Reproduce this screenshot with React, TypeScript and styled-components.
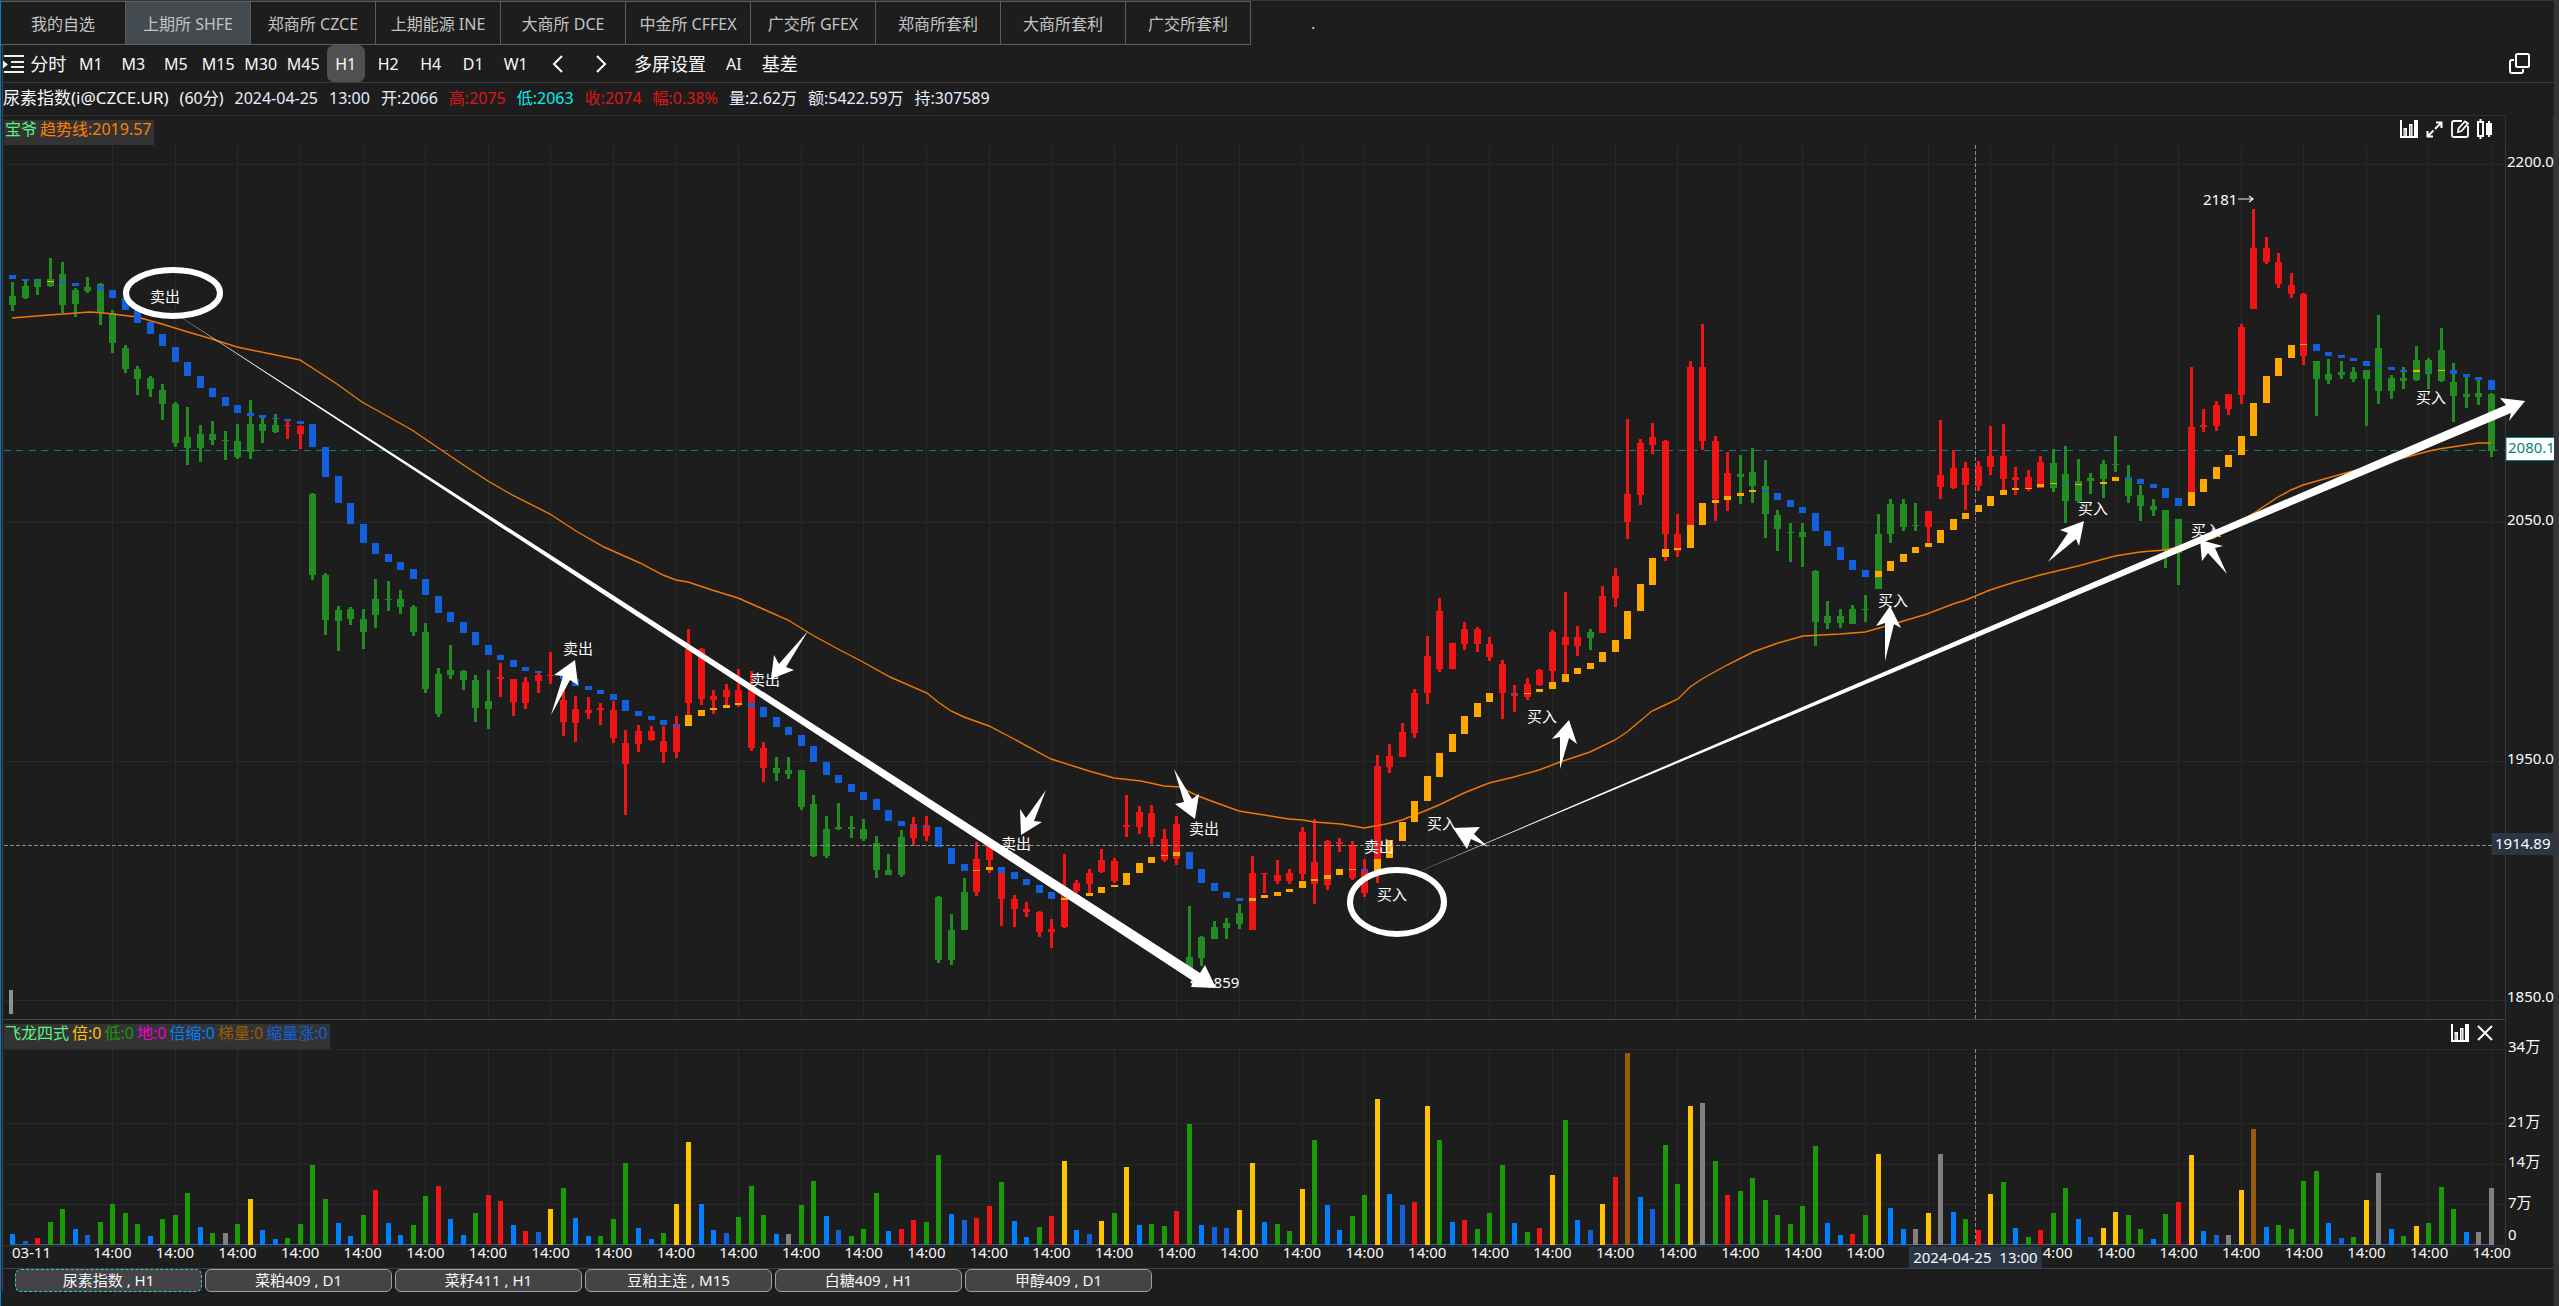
import React from "react";
import styled, { createGlobalStyle } from "styled-components";

/* ---------- data ---------- */

type Candle = [tone: string, high: number, top: number, bottom: number, low: number];

// One entry per hour bar: tone (g = falling, r = rising), high, body top, body bottom, low
const CANDLES: Candle[] = `
g282,296,305,311 g281,286,298,299 g279,279,287,295 g258,279,286,287 g262,274,305,313 g288,290,304,317 g277,287,291,293 g283,284,313,325
g310,313,343,353 g345,348,369,373 g366,369,379,395 g376,378,389,397 g384,390,404,420 g402,404,443,447 g407,437,448,465 g425,434,448,462
g421,434,440,445 g431,440,441,460 g424,441,457,459 g400,424,452,459 g417,424,431,443 g414,425,432,433 r421,425,426,439 r425,426,434,449
g493,494,575,580 g573,575,620,635 g606,610,621,651 g607,609,619,625 g609,619,632,649 g579,599,615,628 g581,599,600,611 g590,599,607,614
g605,607,632,636 g623,632,689,693 g668,674,714,717 g645,670,675,679 g670,671,680,690 g675,680,708,722 g670,701,709,729 r663,677,679,697
r679,679,702,716 r677,682,703,709 r673,675,681,693 r652,675,676,684 r690,700,722,736 r696,709,723,742 r697,710,713,719 r703,708,710,725
r701,710,738,743 r730,743,764,815 r725,731,744,752 r726,731,740,741 r726,741,752,763 r716,724,752,758 r629,649,703,715 r648,649,699,705
r690,696,700,714 r684,690,697,705 r669,690,705,707 r671,687,748,751 r742,748,768,782 g757,768,773,781 g757,770,774,779 g770,770,807,810
g795,804,856,857 g816,829,856,858 g803,827,829,830 g816,827,829,838 g819,829,839,841 g836,843,870,878 g854,870,875,875 g830,837,875,877
r817,824,838,846 r816,825,836,841 g896,897,960,963 g914,930,960,965 g878,892,930,930 r842,859,892,896 r843,845,860,873 r870,873,899,926
r895,899,909,927 r902,909,912,917 r911,912,932,937 r919,929,932,948 r854,887,927,928 r880,883,891,895 r869,873,884,893 r849,860,872,873
r858,861,881,883 r795,825,827,837 r806,812,827,834 r805,813,837,844 r829,839,860,862 r816,824,859,865 g906,957,973,978 g936,937,958,966
g921,927,939,939 g918,923,928,939 g904,913,924,929 r856,873,930,930 r873,873,874,893 r860,875,881,884 r869,873,881,884 r827,832,874,880
r819,862,884,904 r840,841,885,890 r838,842,844,852 r841,846,878,880 r859,870,893,897 r755,766,860,883 r744,756,767,773 r723,732,757,757
r689,693,733,738 r636,656,693,704 r598,611,669,672 r643,643,669,669 r622,629,644,650 r627,629,644,652 r637,644,657,661 r660,664,693,719
r685,694,696,712 r678,684,697,700 r669,670,685,686 r630,632,671,682 r592,637,645,674 r626,637,646,656 g629,632,638,650 r586,596,633,633
r568,576,598,607 r419,494,522,539 r439,443,495,505 r423,437,445,454 r440,441,534,561 r514,534,551,557 r361,367,525,548 r324,367,441,450
r436,441,499,521 r452,473,500,511 g455,474,477,504 g448,472,486,503 g460,486,514,538 g510,515,529,551 g523,532,533,562 g523,532,537,567
g570,571,622,646 g601,616,623,629 g609,616,623,628 g605,609,624,624 g595,609,610,622 g514,534,589,589 g499,504,534,543 g499,504,527,531
g503,525,526,531 r511,511,527,545 r420,475,487,499 r450,468,488,489 r462,468,485,510 r461,466,486,491 r426,456,467,475 r424,456,479,490
r467,477,480,495 r470,477,489,491 r456,462,488,488 g449,463,488,492 g446,474,501,523 g459,481,501,503 g473,478,481,494 g460,464,479,498
g436,464,465,472 g465,477,496,503 g485,495,506,521 g499,506,510,516 g510,510,550,568 g519,519,553,585 r367,427,492,500 r409,425,427,432
r401,405,426,431 r394,394,409,415 r324,327,395,404 r209,248,309,309 r237,248,262,264 r253,262,284,288 r273,285,294,298 r293,294,356,365
g361,361,379,416 g359,374,380,384 g361,372,375,379 g367,372,379,382 g370,370,379,426 g315,348,391,404 g375,378,391,399 g367,378,381,389
g346,360,380,381 g358,360,374,389 g328,350,381,382 g363,382,396,422 g377,394,397,408 g378,393,397,405 g393,394,451,457
`
  .trim()
  .split(/\s+/)
  .map((s) => [s[0], ...s.slice(1).split(",").map(Number)] as Candle);

type Block = [tone: string, top: number, bottom: number];

// Trend blocks (b = down trend, y = up trend), "-" where no block is drawn
const BLOCKS: (Block | null)[] = `
b275,279 b279,281 b281,282 y281,282 b281,283 b283,286 - b286,290 b290,298 b298,310 b310,323 b322,334 b334,346 b347,362 b362,376 b376,388
b388,397 b397,406 b405,413 b413,416 b415,418 b418,419 b419,421 b421,424 b424,447 b447,477 b476,503 b503,524 b524,543 b543,554 b554,562
b562,570 b569,579 b579,595 b596,613 b612,622 b622,633 b632,645 b645,655 b655,660 b660,667 b667,671 b671,673 - b675,679 b679,686 b686,690
b690,694 b694,700 b700,711 b711,716 b716,720 b720,725 b725,727 y715,726 y710,716 y708,710 y705,708 y703,705 b703,707 b707,717 b717,727
b727,735 b735,746 b746,762 b762,775 b775,783 b784,792 b792,800 b799,810 b810,821 b821,826 b826,827 b827,828 b827,847 b848,864 b864,871
y870,871 y867,870 b867,873 b872,879 b879,885 b885,893 b892,899 y898,900 y895,897 y893,896 y887,893 y885,887 y873,885 y863,873 y857,863
y855,856 y852,856 b852,869 b869,883 b883,891 b892,898 b898,901 y898,901 y895,898 y892,896 y889,892 y881,888 y879,881 y875,879 y869,875
y869,870 b869,871 y859,872 y840,858 y822,841 y801,822 y776,801 y753,777 y734,752 y716,734 y703,717 y693,702 - b693,694 y693,694 y689,692
y682,689 y674,682 y668,674 y663,669 y652,662 y640,652 y611,639 y584,611 y558,585 y549,557 y548,550 y525,548 y503,525 y500,503 y496,500
y493,496 y490,492 b490,492 b493,500 b500,507 b507,513 b513,531 b531,546 b547,560 b560,570 b570,577 y571,577 y561,571 y554,562 y547,553
y543,547 y530,543 y519,530 y513,519 y505,512 y496,506 y490,495 y488,490 y488,489 y484,487 y483,484 b483,484 y484,485 - y482,484 y477,481
b477,479 b479,484 b484,488 b488,498 b498,506 y492,506 y479,492 y467,479 y455,467 y436,455 y403,436 y376,403 y358,376 y345,358 y344,345
b344,351 b352,356 b355,358 b358,361 b361,366 b366,367 b367,370 b370,372 y370,372 b370,371 y370,371 b370,374 b374,377 b377,380 b380,390
`
  .trim()
  .split(/\s+/)
  .map((s) => (s === "-" ? null : ([s[0], ...s.slice(1).split(",").map(Number)] as Block)));

// Volume bars: category letter and top edge
const VOLUMES: [string, number][] = `
b1234 d1241 r1238 g1222 g1209 b1229 d1235 g1222 g1204 g1213 g1224 b1236 g1219 g1215 g1193 b1227 g1233 w1233 g1224 y1199 b1230 b1239 g1238
g1224 g1165 g1199 b1223 b1236 g1215 r1190 b1223 b1235 g1225 g1196 r1186 b1219 b1235 g1213 r1195 r1201 b1225 r1231 d1232 y1209 g1188 b1218
b1236 g1236 g1219 g1163 b1228 b1239 g1233 y1204 y1142 b1204 b1230 d1233 g1217 g1186 g1215 b1234 w1234 g1205 g1181 b1216 d1230 g1236 g1229
g1193 b1231 r1229 r1220 g1222 g1155 b1214 d1220 r1218 r1206 g1182 b1221 b1237 g1227 r1216 y1161 b1230 d1234 y1221 g1213 y1167 b1225 g1224
g1226 r1211 g1124 b1225 d1227 d1228 y1210 y1163 b1222 g1224 g1231 y1189 g1140 b1205 b1230 g1216 g1195 y1099 b1194 d1205 r1202 y1106 g1140
b1222 r1220 g1229 g1213 g1165 b1223 g1232 r1228 y1175 g1120 b1220 d1230 y1204 r1177 o1053 b1197 d1209 g1145 g1184 y1106 w1103 g1161 r1195
g1191 g1178 g1200 g1215 g1224 g1206 g1146 b1223 b1235 r1234 g1215 y1154 b1208 b1229 w1229 y1213 w1154 b1212 g1219 r1230 y1194 g1182 b1228
g1237 r1230 g1213 g1188 b1219 d1237 y1228 y1212 g1215 g1229 b1239 g1214 r1202 y1155 b1231 d1235 w1235 y1190 o1129 b1227 g1225 g1229 g1181
g1171 b1223 d1238 g1237 y1200 w1173 b1229 g1236 y1226 g1223 g1187 g1209 b1232 w1232 w1188
`
  .trim()
  .split(/\s+/)
  .map((s) => [s[0], Number(s.slice(1))]);

const TREND_LINE =
  "12,318 49,315 90,312 104,313 137,317 162,324 188,332 212,339 237,347 300,360 337,384 362,402 412,430 437,447 462,464 488,481 514,496 550,514 576,531 604,547 640,563 663,575 676,580 688,582 712,590 738,598 763,609 788,620 801,628 814,636 838,649 863,662 890,677 927,693 938,702 951,711 964,717 989,726 1014,739 1051,759 1089,771 1114,778 1141,781 1164,786 1180,787 1198,796 1214,802 1239,811 1264,815 1289,819 1303,820 1314,822 1341,824 1364,828 1386,824 1402,820 1427,810 1439,805 1464,793 1489,783 1514,777 1539,770 1560,762 1590,752 1615,740 1627,732 1652,711 1665,705 1678,699 1690,687 1702,679 1727,665 1753,652 1778,643 1803,636 1840,634 1865,632 1890,625 1927,614 1953,604 1966,600 1990,590 2015,582 2040,575 2078,566 2115,556 2140,552 2165,550 2178,547 2214,538 2257,511 2278,497 2291,490 2303,485 2349,472 2396,460 2429,451 2439,449 2478,443 2491,443";

const ARROWS = [
  "159,303 1200,973 1205,965 1216,988 1191,987 1193,981",
  "1404,878 2506,405 2500,398 2525,401 2509,421 2511,413",
  "551,715 563,676 554,675 575,660 578,685 570,680",
  "808,631 779,664 774,655 771,679 794,670 786,667",
  "1046,790 1026,818 1020,809 1021,835 1042,822 1034,821",
  "1174,769 1184,802 1175,804 1195,819 1199,794 1192,799",
  "1488,847 1474,834 1480,827 1453,828 1467,849 1471,839",
  "1560,769 1560,737 1552,739 1569,720 1577,744 1569,738",
  "1885,661 1885,623 1876,626 1890,606 1901,628 1894,624",
  "2048,562 2068,533 2060,530 2084,521 2079,546 2076,539",
  "2227,574 2215,548 2223,546 2200,540 2202,561 2208,553",
];

const SIGNALS: [string, number, number][] = [
  ["卖出", 150, 302],
  ["卖出", 563, 654],
  ["卖出", 750, 685],
  ["卖出", 1001, 849],
  ["卖出", 1189, 834],
  ["卖出", 1364, 852],
  ["买入", 1377, 900],
  ["买入", 1427, 829],
  ["买入", 1527, 722],
  ["买入", 1878, 606],
  ["买入", 2078, 514],
  ["买入", 2191, 536],
  ["买入", 2416, 403],
];

const TONES: Record<string, string> = { g: "#228b22", r: "#f01414", b: "#1260dc", y: "#ffa800" };
const VOLUME_TONES: Record<string, string> = {
  g: "#1a9a04",
  r: "#f01414",
  b: "#0080ff",
  d: "#1260dc",
  y: "#ffc400",
  w: "#808080",
  o: "#965c0c",
};

const STEP = 2479 / 198;
const barX = (i: number) => Math.round(12 + i * STEP);
const GRID_X = Array.from({ length: 39 }, (_, k) => barX(8 + 5 * k));

const EXCHANGES = [
  "我的自选",
  "上期所 SHFE",
  "郑商所 CZCE",
  "上期能源 INE",
  "大商所 DCE",
  "中金所 CFFEX",
  "广交所 GFEX",
  "郑商所套利",
  "大商所套利",
  "广交所套利",
];
const PERIODS = ["M1", "M3", "M5", "M15", "M30", "M45", "H1", "H2", "H4", "D1", "W1"];
const QUOTES: [string, string][] = [
  ["(60分)", "#f4f4f4"],
  ["2024-04-25", "#e6eeff"],
  ["13:00", "#e6eeff"],
  ["开:2066", "#e6eeff"],
  ["高:2075", "#e01414"],
  ["低:2063", "#00f0f0"],
  ["收:2074", "#e01414"],
  ["幅:0.38%", "#e01414"],
  ["量:2.62万", "#e6eeff"],
  ["额:5422.59万", "#e6eeff"],
  ["持:307589", "#e6eeff"],
];
const SHEETS = ["尿素指数 , H1", "菜粕409 , D1", "菜籽411 , H1", "豆粕主连 , M15", "白糖409 , H1", "甲醇409 , D1"];

/* ---------- styles ---------- */

const FONT = `"Noto Sans", "Noto Sans CJK SC", sans-serif`;

const GlobalStyle = createGlobalStyle`
  *, *::before, *::after { box-sizing: border-box; }
  body { margin: 0; background: #1d1d1d; color: #f8f8f8; font: 16px/20px ${FONT}; }
  button { font: inherit; color: inherit; background: none; border: 0; padding: 0; margin: 0; cursor: pointer; }
`;

const Shell = styled.div`
  min-height: 100vh;
  display: flex;
  flex-direction: column;
  border-top: 1px solid #34343a;
  border-left: 1px solid #0a80cc;
  border-right: 5px solid #34343a;
  background: #1d1d1d;
  white-space: nowrap;
  overflow: hidden;
`;

const ExchangeBar = styled.nav`
  display: flex;
  align-items: center;
  height: 44px;
`;

const ExchangeTabs = styled.div`
  flex: none;
  display: grid;
  grid-template-columns: repeat(10, 1fr);
  width: 1250px;
  height: 44px;
  border: solid #5c5c5c;
  border-width: 1px 0;
`;

const ExchangeTab = styled.button<{ $active?: boolean }>`
  border-right: 1px solid #5c5c5c;
  padding-top: 2px;
  color: #c4c4c4;
  background: ${(p) => (p.$active ? "#434a50" : "transparent")};
`;

const Dot = styled.span`
  margin-left: 60px;
  color: #c0c0c0;
`;

const Workspace = styled.main`
  margin-left: 1px;
  border-left: 1px solid #48484a;
`;

const Toolbar = styled.div`
  display: flex;
  align-items: center;
  height: 38px;
  border-bottom: 1px solid #3c3c3c;
`;

const PeriodGrid = styled.div`
  display: grid;
  grid-template-columns: repeat(14, 1fr);
  width: 595px;
  height: 37px;
  margin-left: 3px;
`;

const PeriodButton = styled.button<{ $active?: boolean; $large?: boolean }>`
  display: flex;
  align-items: center;
  justify-content: center;
  margin: 0 2px;
  border-radius: 7px;
  font-size: ${(p) => (p.$large ? 18 : 16)}px;
  background: ${(p) => (p.$active ? "#505050" : "transparent")};
`;

const ToolLinks = styled.div`
  display: flex;
  align-items: center;
  gap: 20px;
  padding-left: 12px;
`;

const ToolButton = styled.button<{ $large?: boolean }>`
  font-size: ${(p) => (p.$large ? 18 : 16)}px;
`;

const IconButton = styled.button`
  display: flex;
  align-items: center;
  justify-content: center;
  color: #fff;
`;

const PopOut = styled(IconButton)`
  margin: 0 24px 0 auto;
`;

const QuoteLine = styled.div`
  display: flex;
  align-items: center;
  gap: 11px;
  height: 32px;
  padding-bottom: 2px;
`;

const Quote = styled.span<{ $color: string }>`
  color: ${(p) => p.$color};
`;

const Instrument = styled.span`
  font-size: 17px;
`;

const ChartPane = styled.section`
  border-right: 1px solid #303030;
`;

const PaneHead = styled.header<{ $line: string }>`
  display: flex;
  justify-content: space-between;
  align-items: flex-start;
  height: 30px;
  margin-right: 47px;
  padding-right: 12px;
  border-top: 1px solid ${(p) => p.$line};
  border-right: 1px solid #303030;
`;

const Legend = styled.div`
  display: flex;
  gap: 3px;
  height: 25px;
  margin: 4px 0 0 1px;
  padding: 0 2px 0 1px;
  background: #333333;
  line-height: 18px;
`;

const IconRow = styled.div`
  display: flex;
  align-items: center;
  gap: 8px;
  height: 22px;
  margin-top: 2px;
`;

const Plot = styled.svg`
  display: block;
  width: 100%;
  height: auto;
  overflow: visible;
  font-family: ${FONT};
  font-size: 15px;
  fill: #fcfcfc;
`;

const TimeAxis = styled.div`
  position: relative;
  display: grid;
  grid-template-columns: 78px repeat(39, 1fr) 30px;
  height: 21px;
  font-size: 15px;
  line-height: 10px;
`;

const Tick = styled.span<{ $first?: boolean }>`
  text-align: ${(p) => (p.$first ? "left" : "center")};
  padding-left: ${(p) => (p.$first ? 9 : 0)}px;
`;

const CursorTime = styled.span`
  position: absolute;
  top: 0;
  left: 77.35%;
  transform: translateX(-50%);
  height: 21px;
  padding: 0 4px;
  background: #2a3644;
  line-height: 20px;
  white-space: pre;
`;

const SheetBar = styled.nav`
  display: flex;
  gap: 3px;
  padding-left: 12px;
  border-top: 1px solid #404040;
`;

const SheetTab = styled.button<{ $active?: boolean }>`
  width: 187px;
  height: 23px;
  border: 1px ${(p) => (p.$active ? "dashed #38c8c8" : "solid #a0a0a0")};
  border-radius: 6px;
  background: #424446;
  font-size: 15px;
  line-height: 21px;
`;

/* ---------- icons ---------- */

const IndentIcon = () => (
  <svg width="21" height="20" viewBox="0 0 21 20" stroke="#f0f0f0" strokeWidth="2" aria-hidden="true">
    <path d="M1 2H21M8 8H21M8 13H21M1 18H21" fill="none" />
    <path d="M0 6.5L5 10.5L0 14.5Z" fill="#f0f0f0" stroke="none" />
  </svg>
);

const ChevronIcon = ({ back }: { back?: boolean }) => (
  <svg width="12" height="18" viewBox="0 0 12 18" fill="none" stroke="#fff" strokeWidth="2" aria-hidden="true">
    <path d={back ? "M10 1L2 9L10 17" : "M2 1L10 9L2 17"} />
  </svg>
);

const PopOutIcon = () => (
  <svg width="21" height="21" viewBox="0 0 21 21" fill="none" stroke="#fff" strokeWidth="2" aria-hidden="true">
    <rect x="7" y="1" width="13" height="13" rx="1.5" />
    <path d="M5 7H3Q1 7 1 9V18Q1 20 3 20H12Q14 20 14 18V16" />
  </svg>
);

const BarsIcon = () => (
  <svg width="18" height="18" viewBox="0 0 18 18" fill="#fff" aria-hidden="true">
    <path d="M0 0H2V16H18V18H0Z" />
    <path d="M3.5 8H7V17H3.5ZM9 4H12.5V17H9ZM14 0H18V17H14Z" />
    <path d="M5 9.5V16M10.700 5.5V16" stroke="#9a9a9a" />
  </svg>
);

const ExpandIcon = () => (
  <svg width="17" height="17" viewBox="0 0 17 17" fill="none" stroke="#fff" strokeWidth="2" aria-hidden="true">
    <path d="M10 1.5H15.5V7M15.5 1.5L9 8M7 15.5H1.5V10M1.5 15.5L7.500 9.500" />
  </svg>
);

const EditIcon = () => (
  <svg width="18" height="18" viewBox="0 0 18 18" fill="none" stroke="#fff" strokeWidth="1.8" aria-hidden="true">
    <path d="M11 1H3Q1 1 1 3V15Q1 17 3 17H15Q17 17 17 15V6" />
    <path d="M7 12L7.500 8.500L14 1.500L17 3.500L10.500 11Z" />
  </svg>
);

const CandlesIcon = () => (
  <svg width="16" height="20" viewBox="0 0 16 20" fill="none" stroke="#fff" strokeWidth="2" aria-hidden="true">
    <path d="M3.500 0V3M3.500 17V20M12 2V5M12 14V18" />
    <rect x="1" y="3" width="5" height="14" />
    <rect x="10" y="5" width="4" height="10" fill="#fff" />
  </svg>
);

const CloseIcon = () => (
  <svg width="16" height="16" viewBox="0 0 16 16" fill="none" stroke="#fff" strokeWidth="2" aria-hidden="true">
    <path d="M1 1L15 15M15 1L1 15" />
  </svg>
);

/* ---------- charts ---------- */

const PriceChart = () => (
  <Plot viewBox="3 145 2550 874" role="img" aria-label="尿素指数 60分 K线">
    <g stroke="#292929">
      {GRID_X.map((x) => (
        <path key={x} d={`M${x + 0.5} 145V1019`} />
      ))}
      {[164, 522, 761, 1000].map((y) => (
        <path key={y} d={`M4 ${y + 0.5}H2505`} />
      ))}
    </g>
    <path d="M2505.5 145V1019" stroke="#383838" />
    <path d="M4 450.5H2505" stroke="#0a8080" strokeDasharray="7 5 7 6" />
    <rect x="9" y="990" width="4" height="24" fill="#909090" />

    {CANDLES.map(([tone, high, top, bottom, low], i) => (
      <path
        key={i}
        fill={TONES[tone]}
        d={`M${barX(i) - 1} ${high}h3V${low}h-3ZM${barX(i) - 3} ${top}h7V${Math.max(bottom, top + 1)}h-7Z`}
      />
    ))}
    <polyline points={TREND_LINE} fill="none" stroke="#f07800" strokeWidth="1.4" />
    {BLOCKS.map(
      (b, i) => b && <rect key={i} x={barX(i) - 3} y={b[1]} width="7" height={b[2] - b[1]} fill={TONES[b[0]]} />
    )}

    <g stroke="#8c8c8c" strokeDasharray="4 2">
      <path d="M4 845.5H2505" />
      <path d="M1975.5 145V1019" />
    </g>

    {SIGNALS.map(([label, x, y]) => (
      <text key={`${x}-${y}`} x={x} y={y}>
        {label}
      </text>
    ))}
    <text x="2203" y="205">2181</text>
    <text x="1205" y="988">1859</text>
    <g fill="none" stroke="#f0f0f0" strokeWidth="1.2">
      <path d="M2238 199H2253M2249 196L2253 199L2249 202" />
      <path d="M1203 982H1191M1194 979L1191 982L1194 985" />
    </g>

    <g fill="#fff">
      {ARROWS.map((points) => (
        <polygon key={points} points={points} />
      ))}
    </g>
    <g fill="none" stroke="#fff" strokeWidth="6">
      <ellipse cx="173" cy="293" rx="47" ry="23" />
      <ellipse cx="1397" cy="902" rx="47" ry="32" />
    </g>

    <text x="2507" y="167">2200.0</text>
    <text x="2507" y="525">2050.0</text>
    <text x="2507" y="764">1950.0</text>
    <text x="2507" y="1002">1850.0</text>
    <rect x="2506" y="437.5" width="50" height="23" fill="#fff" stroke="#0a8080" />
    <text x="2508" y="453" fill="#0a8080">2080.1</text>
    <rect x="2492" y="833" width="62" height="22" fill="#2a3644" />
    <text x="2495" y="849">1914.89</text>
  </Plot>
);

const VolumeChart = () => (
  <Plot viewBox="3 1049 2550 198" role="img" aria-label="成交量">
    <g stroke="#292929">
      {GRID_X.map((x) => (
        <path key={x} d={`M${x + 0.5} 1049V1244`} />
      ))}
      {[1049, 1123, 1164, 1204].map((y) => (
        <path key={y} d={`M4 ${y + 0.5}H2505`} />
      ))}
    </g>
    <path d="M2505.5 1049V1247M4 1246H2505" stroke="#383838" />
    <path d="M12 1244.5H2494" stroke="#2c5cb4" />
    {VOLUMES.map(([tone, top], i) => (
      <rect key={i} x={barX(i) - 2} y={top} width="5" height={1245 - top} fill={VOLUME_TONES[tone]} />
    ))}
    <path d="M1975.5 1049V1247" stroke="#8c8c8c" strokeDasharray="4 2" />
    <text x="2508" y="1052">34万</text>
    <text x="2508" y="1127">21万</text>
    <text x="2508" y="1167">14万</text>
    <text x="2508" y="1208">7万</text>
    <text x="2508" y="1240">0</text>
  </Plot>
);

/* ---------- page ---------- */

export default function App() {
  return (
    <>
      <GlobalStyle />
      <Shell>
        <ExchangeBar>
          <ExchangeTabs>
            {EXCHANGES.map((name, i) => (
              <ExchangeTab key={name} $active={i === 1}>
                {name}
              </ExchangeTab>
            ))}
          </ExchangeTabs>
          <Dot>.</Dot>
        </ExchangeBar>

        <Workspace>
          <Toolbar>
            <IconButton aria-label="菜单">
              <IndentIcon />
            </IconButton>
            <PeriodGrid>
              <PeriodButton $large>分时</PeriodButton>
              {PERIODS.map((p) => (
                <PeriodButton key={p} $active={p === "H1"}>
                  {p}
                </PeriodButton>
              ))}
              <PeriodButton aria-label="上一个">
                <ChevronIcon back />
              </PeriodButton>
              <PeriodButton aria-label="下一个">
                <ChevronIcon />
              </PeriodButton>
            </PeriodGrid>
            <ToolLinks>
              <ToolButton $large>多屏设置</ToolButton>
              <ToolButton>AI</ToolButton>
              <ToolButton $large>基差</ToolButton>
            </ToolLinks>
            <PopOut aria-label="弹出窗口">
              <PopOutIcon />
            </PopOut>
          </Toolbar>

          <QuoteLine>
            <Instrument>尿素指数(i@CZCE.UR)</Instrument>
            {QUOTES.map(([text, color]) => (
              <Quote key={text} $color={color}>
                {text}
              </Quote>
            ))}
          </QuoteLine>

          <ChartPane>
            <PaneHead $line="#303030">
              <Legend>
                <Quote $color="#5ef082">宝爷</Quote>
                <Quote $color="#ff8000">趋势线:2019.57</Quote>
              </Legend>
              <IconRow>
                <IconButton aria-label="指标">
                  <BarsIcon />
                </IconButton>
                <IconButton aria-label="展开">
                  <ExpandIcon />
                </IconButton>
                <IconButton aria-label="画线">
                  <EditIcon />
                </IconButton>
                <IconButton aria-label="K线样式">
                  <CandlesIcon />
                </IconButton>
              </IconRow>
            </PaneHead>
            <PriceChart />
            <PaneHead $line="#444444">
              <Legend>
                <Quote $color="#5ef082">飞龙四式</Quote>
                <Quote $color="#ffc400">倍:0</Quote>
                <Quote $color="#1a9a04">低:0</Quote>
                <Quote $color="#f000d0">地:0</Quote>
                <Quote $color="#0080ff">倍缩:0</Quote>
                <Quote $color="#965c0c">梯量:0</Quote>
                <Quote $color="#1260dc">缩量涨:0</Quote>
              </Legend>
              <IconRow>
                <IconButton aria-label="指标">
                  <BarsIcon />
                </IconButton>
                <IconButton aria-label="关闭">
                  <CloseIcon />
                </IconButton>
              </IconRow>
            </PaneHead>
            <VolumeChart />
            <TimeAxis>
              <Tick $first>03-11</Tick>
              {GRID_X.map((x) => (
                <Tick key={x}>14:00</Tick>
              ))}
              <CursorTime>2024-04-25  13:00</CursorTime>
            </TimeAxis>
          </ChartPane>

          <SheetBar>
            {SHEETS.map((name, i) => (
              <SheetTab key={name} $active={i === 0}>
                {name}
              </SheetTab>
            ))}
          </SheetBar>
        </Workspace>
      </Shell>
    </>
  );
}
